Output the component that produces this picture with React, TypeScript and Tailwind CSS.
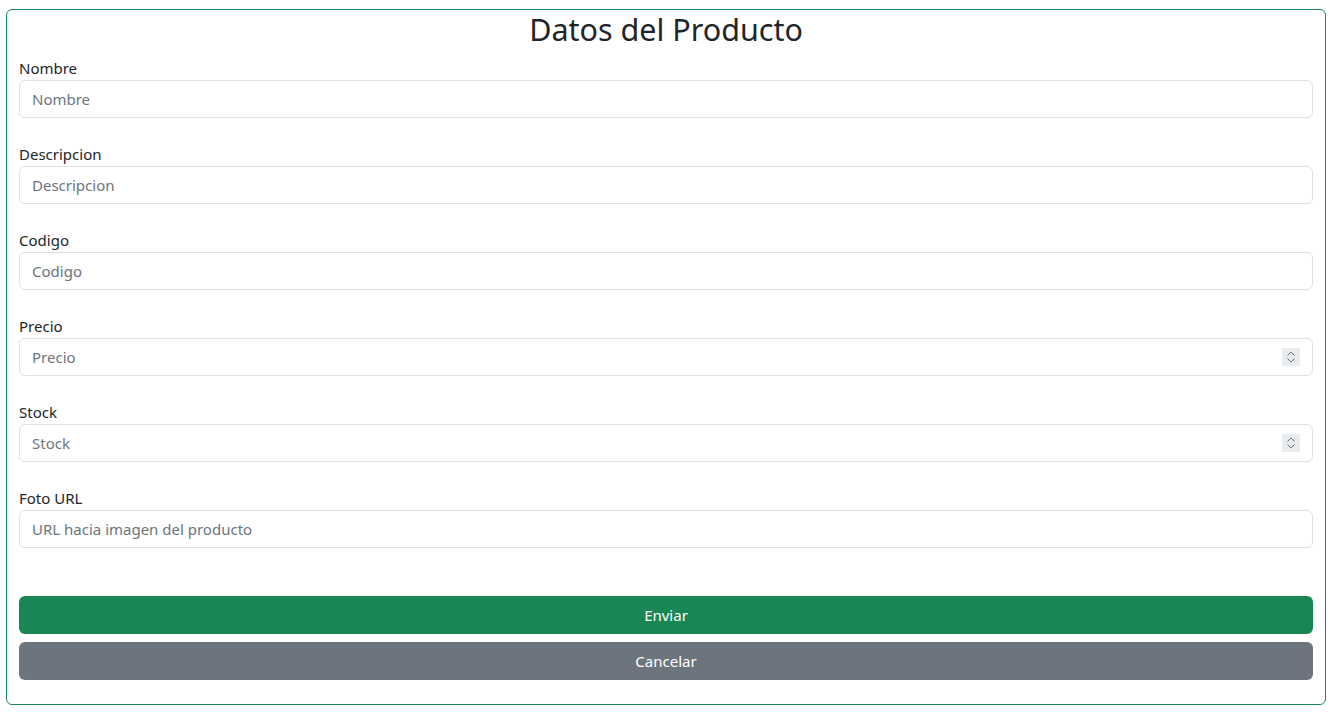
const fields = [
  { label: "Nombre", placeholder: "Nombre", type: "text" },
  { label: "Descripcion", placeholder: "Descripcion", type: "text" },
  { label: "Codigo", placeholder: "Codigo", type: "text" },
  { label: "Precio", placeholder: "Precio", type: "number" },
  { label: "Stock", placeholder: "Stock", type: "number" },
  { label: "Foto URL", placeholder: "URL hacia imagen del producto", type: "text" },
];

function Spinner() {
  return (
    <div className="pointer-events-none absolute right-[13px] top-[10px] flex h-[18px] w-[18px] flex-col items-center justify-center bg-[#e9ecef]">
      <svg width="10" height="14" viewBox="0 0 10 14" fill="none" stroke="#6c757d" strokeWidth="1">
        <path d="M1.5 5.5 L5 2 L8.5 5.5" />
        <path d="M1.5 8.5 L5 12 L8.5 8.5" />
      </svg>
    </div>
  );
}

export default function App() {
  return (
    <div className="min-h-screen bg-white px-[6px] pt-[9px] font-['Noto_Sans',sans-serif] text-[#212529]">
      <div className="w-[1320px] rounded-[6px] border border-[#198754] px-3 pb-6">
        <h2 className="mb-2 pt-[1px] text-center text-[30.5px] leading-[37px] font-normal">Datos del Producto</h2>
        <form onSubmit={(e) => e.preventDefault()} className="flex flex-col gap-6">
          {fields.map((f) => (
            <div key={f.label}>
              <label className="block text-[15px] leading-6">{f.label}</label>
              <div className="relative">
                <input
                  type={f.type}
                  placeholder={f.placeholder}
                  className="block h-[38px] w-full rounded-[6px] border border-[#dee2e6] px-3 text-[15px] text-[#212529] placeholder:text-[#6c757d] outline-none [appearance:textfield] [&::-webkit-inner-spin-button]:appearance-none [&::-webkit-outer-spin-button]:appearance-none"
                />
                {f.type === "number" && <Spinner />}
              </div>
            </div>
          ))}
          <div className="flex flex-col gap-2 pt-6">
            <button
              type="submit"
              className="block h-[38px] w-full rounded-[6px] bg-[#198754] text-[15px] text-white"
            >
              Enviar
            </button>
            <button
              type="button"
              className="block h-[38px] w-full rounded-[6px] bg-[#6c757d] text-[15px] text-white"
            >
              Cancelar
            </button>
          </div>
        </form>
      </div>
    </div>
  );
}
